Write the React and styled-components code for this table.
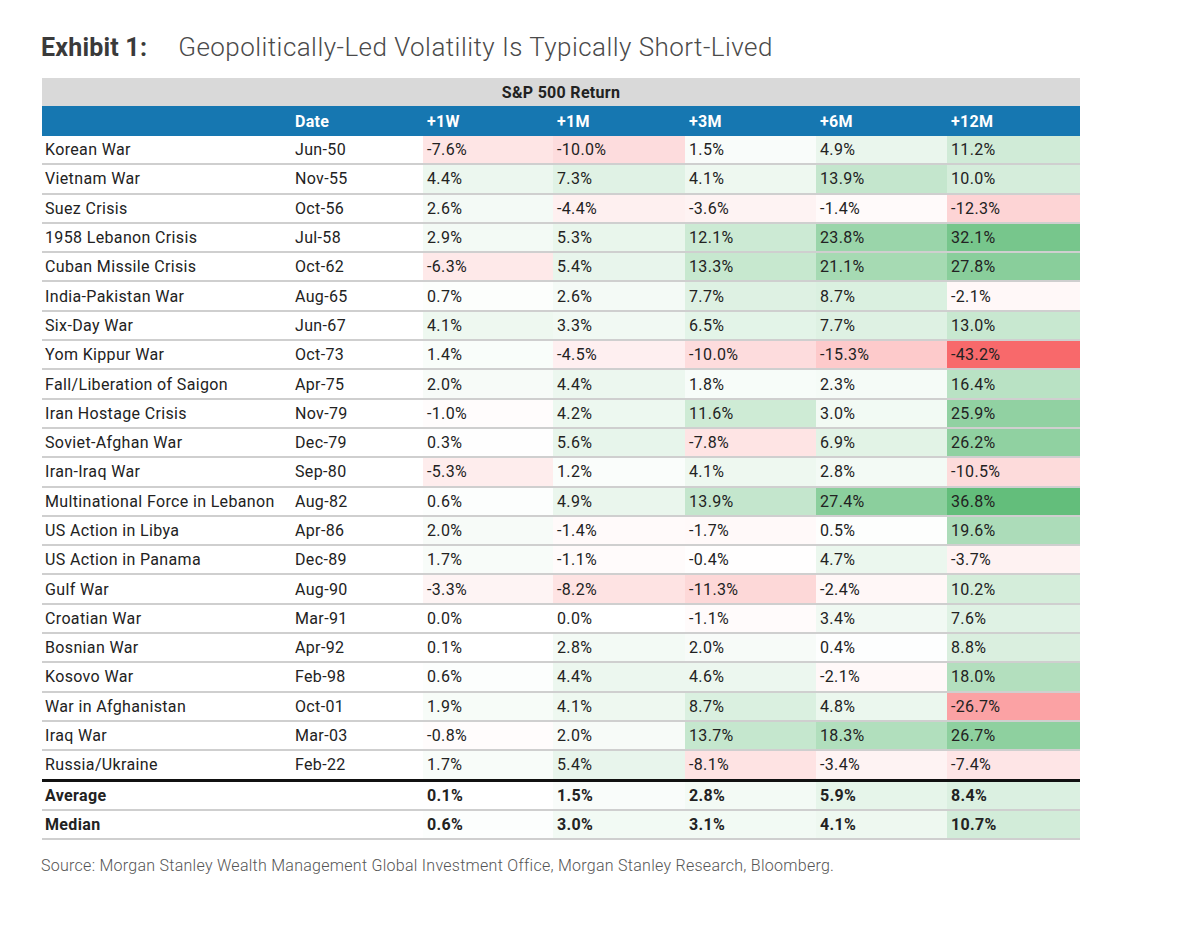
import React from "react";
import styled, { createGlobalStyle } from "styled-components";

const GlobalStyle = createGlobalStyle`
  html, body { margin: 0; padding: 0; background: #ffffff; }
  body { font-family: Roboto, "Liberation Sans", Arial, sans-serif; color: #222; }
`;

const Page = styled.div`
  width: 1179px;
  height: 930px;
  box-sizing: border-box;
  padding: 31px 0 0 41px;
`;

const Title = styled.h1`
  margin: 0 0 14px 0;
  display: flex;
  align-items: baseline;
  gap: 31px;
  font-size: 25px;
  line-height: 32px;
  font-weight: 400;
`;

const Exhibit = styled.span`
  font-weight: 700;
  color: #3a3a3a;
  letter-spacing: 0.2px;
`;

const Subtitle = styled.span`
  font-size: 26px;
  font-weight: 300;
  color: #4a4a4a;
  letter-spacing: 0.45px;
`;

const Table = styled.table`
  margin-left: 1px;
  width: 1038px;
  border-collapse: collapse;
  table-layout: fixed;
  font-size: 16px;
  letter-spacing: 0.35px;
`;

const GroupHead = styled.th`
  background: #d9d9d9;
  height: 28px;
  padding: 0;
  font-size: 16px;
  letter-spacing: 0.3px;
  font-weight: 700;
  color: #222;
  text-align: center;
`;

const ColHead = styled.th`
  background: #1677b1;
  height: 30px;
  padding: 0 0 0 ${(p) => (p.$first ? 3 : 4)}px;
  font-size: 16px;
  letter-spacing: 0.3px;
  font-weight: 700;
  color: #ffffff;
  text-align: left;
`;

const Row = styled.tr`
  border-bottom: ${(p) => (p.$thick ? "3px solid #111" : "2px solid #cfcfcf")};
`;

const Cell = styled.td`
  height: 27.3px;
  padding: 0 0 0 ${(p) => (p.$first ? 3 : 4)}px;
  background: ${(p) => p.$bg || "#ffffff"};
  font-weight: ${(p) => (p.$bold ? 700 : 400)};
  color: #222;
  white-space: nowrap;
  overflow: hidden;
`;

const Source = styled.p`
  margin: 16px 0 0 0;
  font-size: 16px;
  letter-spacing: 0.27px;
  font-weight: 300;
  color: #555;
`;

const rows = [
  ["Korean War", "Jun-50", -7.6, -10.0, 1.5, 4.9, 11.2],
  ["Vietnam War", "Nov-55", 4.4, 7.3, 4.1, 13.9, 10.0],
  ["Suez Crisis", "Oct-56", 2.6, -4.4, -3.6, -1.4, -12.3],
  ["1958 Lebanon Crisis", "Jul-58", 2.9, 5.3, 12.1, 23.8, 32.1],
  ["Cuban Missile Crisis", "Oct-62", -6.3, 5.4, 13.3, 21.1, 27.8],
  ["India-Pakistan War", "Aug-65", 0.7, 2.6, 7.7, 8.7, -2.1],
  ["Six-Day War", "Jun-67", 4.1, 3.3, 6.5, 7.7, 13.0],
  ["Yom Kippur War", "Oct-73", 1.4, -4.5, -10.0, -15.3, -43.2],
  ["Fall/Liberation of Saigon", "Apr-75", 2.0, 4.4, 1.8, 2.3, 16.4],
  ["Iran Hostage Crisis", "Nov-79", -1.0, 4.2, 11.6, 3.0, 25.9],
  ["Soviet-Afghan War", "Dec-79", 0.3, 5.6, -7.8, 6.9, 26.2],
  ["Iran-Iraq War", "Sep-80", -5.3, 1.2, 4.1, 2.8, -10.5],
  ["Multinational Force in Lebanon", "Aug-82", 0.6, 4.9, 13.9, 27.4, 36.8],
  ["US Action in Libya", "Apr-86", 2.0, -1.4, -1.7, 0.5, 19.6],
  ["US Action in Panama", "Dec-89", 1.7, -1.1, -0.4, 4.7, -3.7],
  ["Gulf War", "Aug-90", -3.3, -8.2, -11.3, -2.4, 10.2],
  ["Croatian War", "Mar-91", 0.0, 0.0, -1.1, 3.4, 7.6],
  ["Bosnian War", "Apr-92", 0.1, 2.8, 2.0, 0.4, 8.8],
  ["Kosovo War", "Feb-98", 0.6, 4.4, 4.6, -2.1, 18.0],
  ["War in Afghanistan", "Oct-01", 1.9, 4.1, 8.7, 4.8, -26.7],
  ["Iraq War", "Mar-03", -0.8, 2.0, 13.7, 18.3, 26.7],
  ["Russia/Ukraine", "Feb-22", 1.7, 5.4, -8.1, -3.4, -7.4],
];

const summary = [
  ["Average", "", 0.1, 1.5, 2.8, 5.9, 8.4],
  ["Median", "", 0.6, 3.0, 3.1, 4.1, 10.7],
];

const MIN = -43.2;
const MAX = 36.8;
const RED = [248, 105, 107];
const GREEN = [99, 190, 123];

function scale(v) {
  const target = v >= 0 ? GREEN : RED;
  const t = v >= 0 ? v / MAX : v / MIN;
  const c = target.map((x) => Math.round(255 + (x - 255) * t));
  return `rgb(${c[0]}, ${c[1]}, ${c[2]})`;
}

const fmt = (v) => `${v.toFixed(1)}%`;

const widths = [249, 132, 130, 132, 131, 131, 133];
const heads = ["", "Date", "+1W", "+1M", "+3M", "+6M", "+12M"];

function DataRow({ r, bold, thick }) {
  return (
    <Row $thick={thick}>
      <Cell $first $bold={bold}>{r[0]}</Cell>
      <Cell $bold={bold}>{r[1]}</Cell>
      {r.slice(2).map((v, i) => (
        <Cell key={i} $bold={bold} $bg={scale(v)}>
          {fmt(v)}
        </Cell>
      ))}
    </Row>
  );
}

export default function App() {
  return (
    <Page>
      <GlobalStyle />
      <Title>
        <Exhibit>Exhibit 1:</Exhibit>
        <Subtitle>Geopolitically-Led Volatility Is Typically Short-Lived</Subtitle>
      </Title>
      <Table>
        <colgroup>
          {widths.map((w, i) => (
            <col key={i} style={{ width: w }} />
          ))}
        </colgroup>
        <thead>
          <tr>
            <GroupHead colSpan={7}>S&amp;P 500 Return</GroupHead>
          </tr>
          <tr>
            {heads.map((h, i) => (
              <ColHead key={i} $first={i === 0}>
                {h}
              </ColHead>
            ))}
          </tr>
        </thead>
        <tbody>
          {rows.map((r, i) => (
            <DataRow key={r[0]} r={r} thick={i === rows.length - 1} />
          ))}
          {summary.map((r) => (
            <DataRow key={r[0]} r={r} bold />
          ))}
        </tbody>
      </Table>
      <Source>
        Source: Morgan Stanley Wealth Management Global Investment Office, Morgan Stanley Research, Bloomberg.
      </Source>
    </Page>
  );
}
